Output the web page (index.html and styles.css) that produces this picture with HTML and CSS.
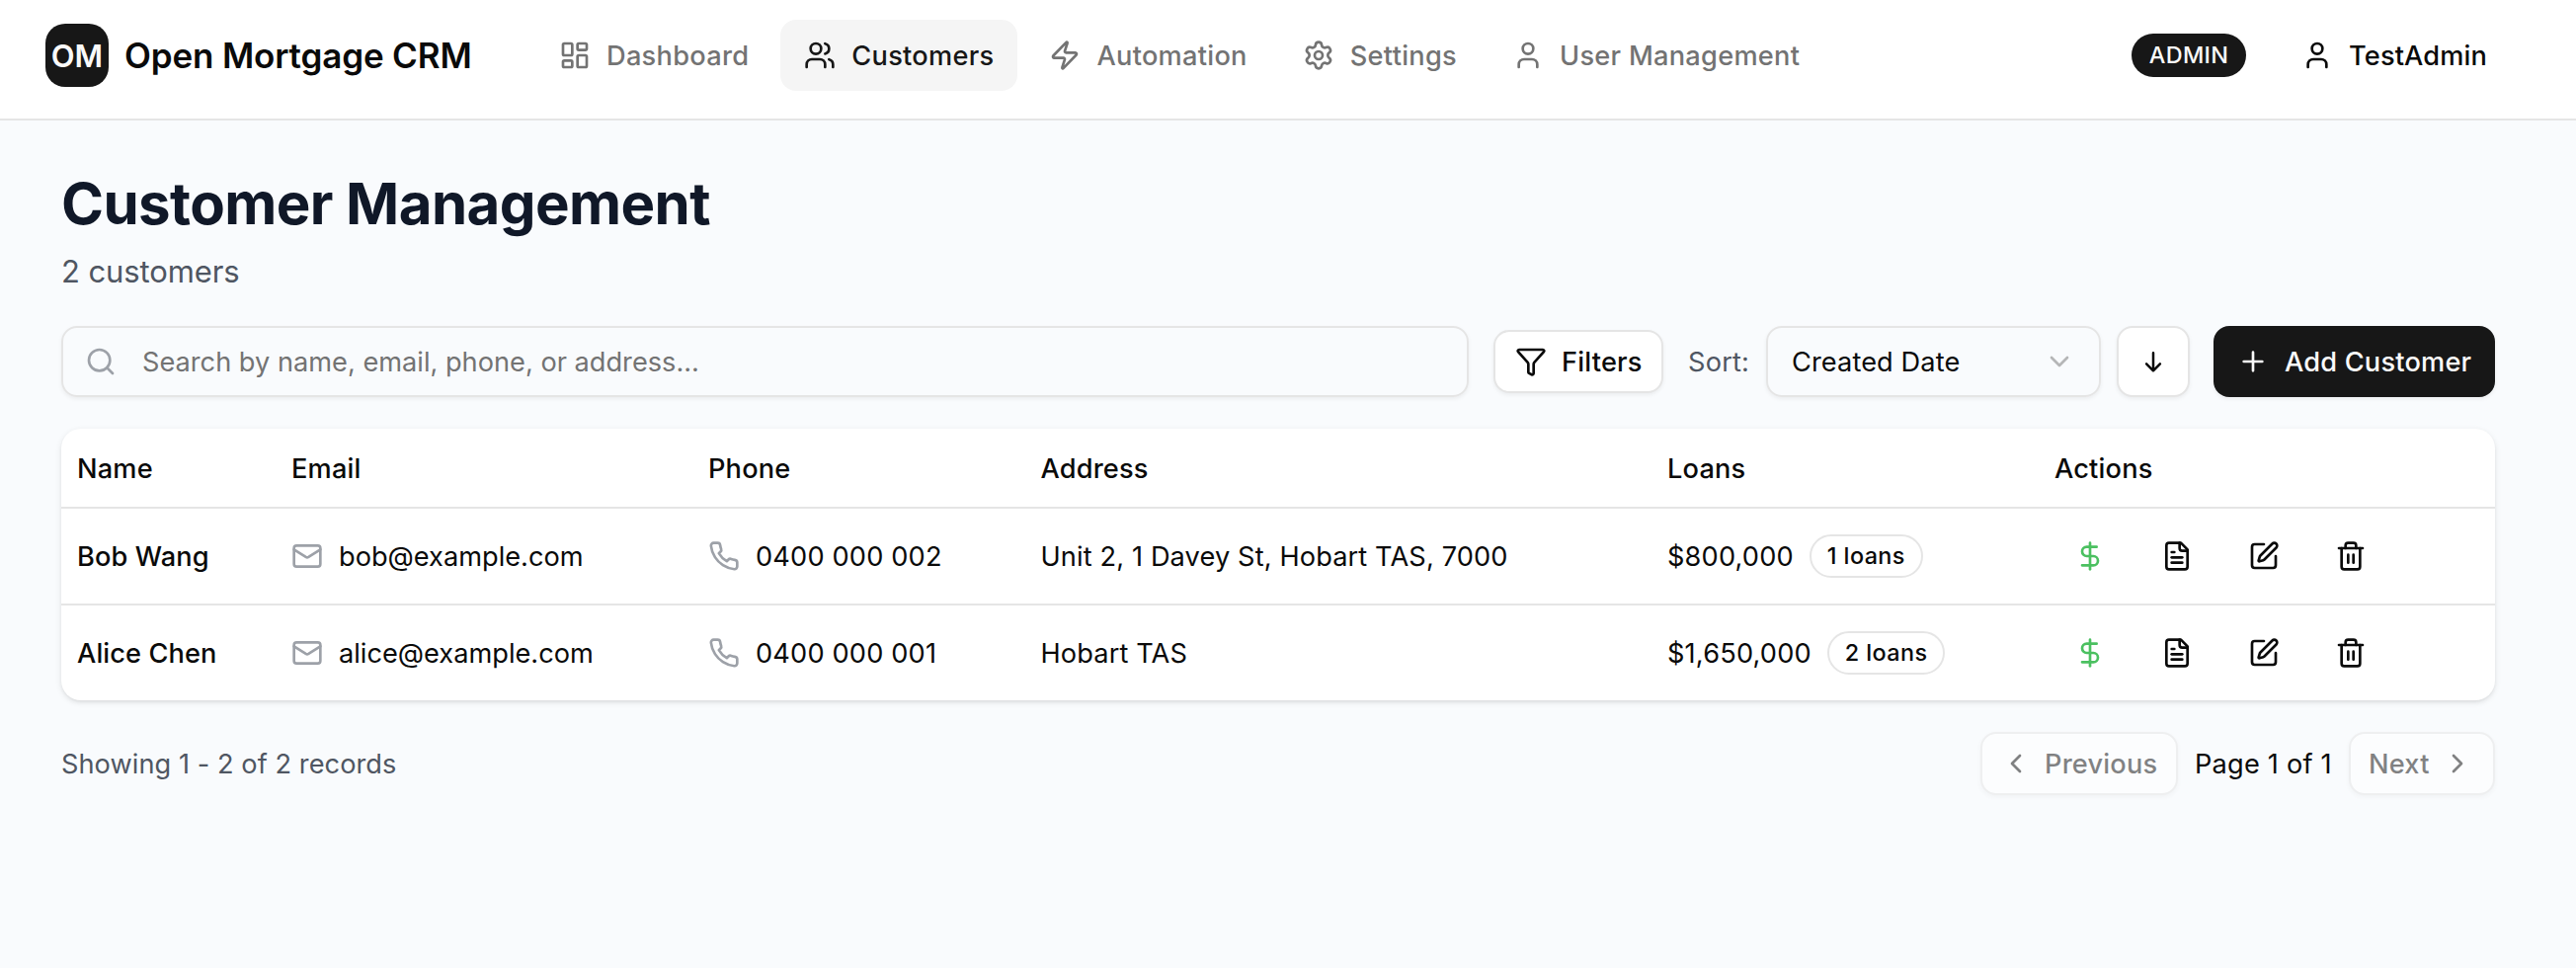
FILE: index.html
```html
<!DOCTYPE html>
<html lang="en">
<head>
<meta charset="utf-8">
<title>Open Mortgage CRM</title>
<link rel="stylesheet" href="styles.css">
</head>
<body>
<svg class="sprite" xmlns="http://www.w3.org/2000/svg">
  <symbol id="dashboard" viewBox="0 0 24 24"><rect width="7" height="9" x="3" y="3" rx="1"/><rect width="7" height="5" x="14" y="3" rx="1"/><rect width="7" height="9" x="14" y="12" rx="1"/><rect width="7" height="5" x="3" y="16" rx="1"/></symbol>
  <symbol id="users" viewBox="0 0 24 24"><path d="M16 21v-2a4 4 0 0 0-4-4H6a4 4 0 0 0-4 4v2"/><circle cx="9" cy="7" r="4"/><path d="M22 21v-2a4 4 0 0 0-3-3.87"/><path d="M16 3.13a4 4 0 0 1 0 7.75"/></symbol>
  <symbol id="zap" viewBox="0 0 24 24"><path d="M4 14a1 1 0 0 1-.78-1.63l9.9-10.2a.5.5 0 0 1 .86.46l-1.92 6.02A1 1 0 0 0 13 10h7a1 1 0 0 1 .78 1.63l-9.9 10.2a.5.5 0 0 1-.86-.46l1.92-6.02A1 1 0 0 0 11 14z"/></symbol>
  <symbol id="settings" viewBox="0 0 24 24"><path d="M9.671 4.136a2.34 2.34 0 0 1 4.659 0 2.34 2.34 0 0 0 3.319 1.915 2.34 2.34 0 0 1 2.33 4.033 2.34 2.34 0 0 0 0 3.831 2.34 2.34 0 0 1-2.33 4.033 2.34 2.34 0 0 0-3.319 1.915 2.34 2.34 0 0 1-4.659 0 2.34 2.34 0 0 0-3.32-1.915 2.34 2.34 0 0 1-2.33-4.033 2.34 2.34 0 0 0 0-3.831A2.34 2.34 0 0 1 6.35 6.051a2.34 2.34 0 0 0 3.319-1.915"/><circle cx="12" cy="12" r="3"/></symbol>
  <symbol id="user" viewBox="0 0 24 24"><path d="M19 21v-2a4 4 0 0 0-4-4H9a4 4 0 0 0-4 4v2"/><circle cx="12" cy="7" r="4"/></symbol>
  <symbol id="search" viewBox="0 0 24 24"><circle cx="11" cy="11" r="8"/><path d="m21 21-4.3-4.3"/></symbol>
  <symbol id="filter" viewBox="0 0 24 24"><path d="M10 20a1 1 0 0 0 .553.895l2 1A1 1 0 0 0 14 21v-7a2 2 0 0 1 .517-1.341L21.74 4.67A1 1 0 0 0 21 3H3a1 1 0 0 0-.742 1.67l7.225 7.989A2 2 0 0 1 10 14z"/></symbol>
  <symbol id="chevron-down" viewBox="0 0 24 24"><path d="m6 9 6 6 6-6"/></symbol>
  <symbol id="chevron-left" viewBox="0 0 24 24"><path d="m15 18-6-6 6-6"/></symbol>
  <symbol id="chevron-right" viewBox="0 0 24 24"><path d="m9 18 6-6-6-6"/></symbol>
  <symbol id="arrow-down" viewBox="0 0 32 32"><path d="M16 7.2v18.1M9.1 18.4l6.9 6.9 6.9-6.9"/></symbol>
  <symbol id="plus" viewBox="0 0 24 24"><path d="M5 12h14M12 5v14"/></symbol>
  <symbol id="mail" viewBox="0 0 24 24"><rect width="20" height="16" x="2" y="4" rx="2"/><path d="m22 7-8.991 5.727a2 2 0 0 1-2.009 0L2 7"/></symbol>
  <symbol id="phone" viewBox="0 0 24 24"><path d="M22 16.92v3a2 2 0 0 1-2.18 2 19.79 19.79 0 0 1-8.63-3.07 19.5 19.5 0 0 1-6-6 19.79 19.79 0 0 1-3.07-8.67A2 2 0 0 1 4.11 2h3a2 2 0 0 1 2 1.72 12.84 12.84 0 0 0 .7 2.81 2 2 0 0 1-.45 2.11L8.09 9.91a16 16 0 0 0 6 6l1.27-1.27a2 2 0 0 1 2.11-.45 12.84 12.84 0 0 0 2.81.7A2 2 0 0 1 22 16.92z"/></symbol>
  <symbol id="dollar" viewBox="0 0 24 24"><path d="M12 2v20"/><path d="M17 5H9.5a3.5 3.5 0 0 0 0 7h5a3.5 3.5 0 0 1 0 7H6"/></symbol>
  <symbol id="file" viewBox="0 0 24 24"><path d="M15 2H6a2 2 0 0 0-2 2v16a2 2 0 0 0 2 2h12a2 2 0 0 0 2-2V7z"/><path d="M14 2v4a2 2 0 0 0 2 2h4"/><path d="M10 9H8"/><path d="M16 13H8"/><path d="M16 17H8"/></symbol>
  <symbol id="edit" viewBox="0 0 24 24"><path d="M12 3H5a2 2 0 0 0-2 2v14a2 2 0 0 0 2 2h14a2 2 0 0 0 2-2v-7"/><path d="M18.375 2.625a1 1 0 0 1 3 3l-9.013 9.014a2 2 0 0 1-.853.505l-2.873.84a.5.5 0 0 1-.62-.62l.84-2.873a2 2 0 0 1 .506-.852z"/></symbol>
  <symbol id="trash" viewBox="0 0 24 24"><path d="M3 6h18"/><path d="M19 6v14a2 2 0 0 1-2 2H7a2 2 0 0 1-2-2V6"/><path d="M8 6V4a2 2 0 0 1 2-2h4a2 2 0 0 1 2 2v2"/><path d="M10 11v6"/><path d="M14 11v6"/></symbol>
</svg>

<header class="topbar">
  <div class="logo">OM</div>
  <div class="brand">Open Mortgage CRM</div>
  <nav class="nav">
    <a class="nav-item"><svg class="icon"><use href="#dashboard"/></svg><span>Dashboard</span></a>
    <a class="nav-item active"><svg class="icon"><use href="#users"/></svg><span>Customers</span></a>
    <a class="nav-item"><svg class="icon"><use href="#zap"/></svg><span>Automation</span></a>
    <a class="nav-item"><svg class="icon"><use href="#settings"/></svg><span>Settings</span></a>
    <a class="nav-item"><svg class="icon"><use href="#user"/></svg><span>User Management</span></a>
  </nav>
  <span class="role">ADMIN</span>
  <div class="account"><svg class="icon"><use href="#user"/></svg><span>TestAdmin</span></div>
</header>

<main class="page">
  <h1 class="title">Customer Management</h1>
  <p class="subtitle">2 customers</p>

  <div class="toolbar">
    <div class="search"><svg class="icon"><use href="#search"/></svg><span>Search by name, email, phone, or address...</span></div>
    <button class="btn filters"><svg class="icon"><use href="#filter"/></svg><span>Filters</span></button>
    <span class="sort-label">Sort:</span>
    <div class="select"><span>Created Date</span><svg class="icon"><use href="#chevron-down"/></svg></div>
    <button class="btn direction"><svg class="icon"><use href="#arrow-down"/></svg></button>
    <button class="btn add"><svg class="icon"><use href="#plus"/></svg><span>Add Customer</span></button>
  </div>

  <div class="table">
    <div class="row head">
      <div>Name</div><div>Email</div><div>Phone</div><div>Address</div><div>Loans</div><div>Actions</div>
    </div>
    <div class="row">
      <div class="name">Bob Wang</div>
      <div class="cell email"><svg class="icon muted"><use href="#mail"/></svg><span>bob@example.com</span></div>
      <div class="cell"><svg class="icon muted"><use href="#phone"/></svg><span>0400 000 002</span></div>
      <div class="address">Unit 2, 1 Davey St, Hobart TAS, 7000</div>
      <div class="cell"><span>$800,000</span><span class="badge">1 loans</span></div>
      <div class="actions"><svg class="icon green"><use href="#dollar"/></svg><svg class="icon"><use href="#file"/></svg><svg class="icon"><use href="#edit"/></svg><svg class="icon"><use href="#trash"/></svg></div>
    </div>
    <div class="row">
      <div class="name">Alice Chen</div>
      <div class="cell email"><svg class="icon muted"><use href="#mail"/></svg><span>alice@example.com</span></div>
      <div class="cell"><svg class="icon muted"><use href="#phone"/></svg><span>0400 000 001</span></div>
      <div class="address">Hobart TAS</div>
      <div class="cell"><span>$1,650,000</span><span class="badge">2 loans</span></div>
      <div class="actions"><svg class="icon green"><use href="#dollar"/></svg><svg class="icon"><use href="#file"/></svg><svg class="icon"><use href="#edit"/></svg><svg class="icon"><use href="#trash"/></svg></div>
    </div>
  </div>

  <div class="footer">
    <span class="summary">Showing 1 - 2 of 2 records</span>
    <div class="pager">
      <button class="btn prev" disabled><svg class="icon"><use href="#chevron-left"/></svg><span>Previous</span></button>
      <span class="page-count">Page 1 of 1</span>
      <button class="btn next" disabled><span>Next</span><svg class="icon"><use href="#chevron-right"/></svg></button>
    </div>
  </div>
</main>
</body>
</html>
```
FILE: styles.css
```css
* { box-sizing: border-box; }
body {
  margin: 0;
  min-height: 980px;
  background: #f9fbfd;
  color: #0a0a0a;
  font: 400 27.2px/40px Inter, sans-serif;
  white-space: nowrap;
}
.sprite { display: none; }
.icon {
  width: 32px;
  height: 32px;
  flex: none;
  fill: none;
  stroke: currentColor;
  stroke-width: 2;
  stroke-linecap: round;
  stroke-linejoin: round;
}
.topbar {
  display: flex;
  align-items: center;
  height: 122px;
  padding: 0 50px 8px 46px;
  background: #fff;
  border-bottom: 2px solid #e5e5e5;
}
.logo {
  width: 64px;
  height: 64px;
  border-radius: 20px;
  background: #171717;
  color: #fafafa;
  font-size: 31px;
  font-weight: 600;
  line-height: 66px;
  text-align: center;
}
.brand {
  width: 416px;
  padding-left: 16px;
  font-size: 35px;
  font-weight: 600;
  letter-spacing: -0.15px;
}
.nav {
  display: flex;
  gap: 8px;
  margin-left: 16px;
  font-weight: 500;
  letter-spacing: .28px;
}
.nav-item {
  display: flex;
  align-items: center;
  gap: 16px;
  height: 72px;
  padding: 0 24px;
  border-radius: 16px;
  color: #737373;
}
.nav-item.active { background: #f5f5f5; color: #171717; }
.role {
  display: flex;
  align-items: center;
  justify-content: center;
  width: 116px;
  height: 44px;
  margin-left: auto;
  border-radius: 22px;
  background: #171717;
  color: #fafafa;
  font-size: 23.4px;
  font-weight: 500;
  letter-spacing: .3px;
}
.account {
  display: flex;
  align-items: center;
  gap: 16px;
  width: 284px;
  padding-left: 56px;
  font-weight: 500;
  letter-spacing: .15px;
}
.nav-item span, .account span, .search span, .btn span, .select span,
.sort-label, .name, .address, .head div, .cell span, .summary, .page-count {
  padding-top: 2px;
}
.page { padding: 48px 82px 0 62px; }
.title {
  margin: 0;
  color: #101828;
  font-size: 58.2px;
  font-weight: 700;
  line-height: 72px;
  letter-spacing: -.6px;
}
.subtitle { margin: 9px 0 0; color: #4f5662; font-size: 31px; line-height: 48px; letter-spacing: -.1px; }
.toolbar { display: flex; align-items: center; margin-top: 31px; }
.search, .select, .btn {
  display: flex;
  align-items: center;
  height: 72px;
  border: 2px solid #e5e5e5;
  border-radius: 16px;
  box-shadow: 0 2px 4px rgba(0, 0, 0, .06);
}
.search {
  flex: 1;
  gap: 26px;
  padding-left: 22px;
  color: #737373;
}
.search .icon { color: #9da1a8; }
.btn {
  background: #fff;
  color: #0a0a0a;
  font: inherit;
  font-weight: 500;
  letter-spacing: .2px;
  padding: 0 20px;
}
.filters { width: 172px; height: 64px; margin-left: 25px; gap: 15px; }
.sort-label { width: 79px; margin-left: 25px; color: #4f5662; letter-spacing: .2px; }
.select { width: 339px; justify-content: space-between; padding: 0 24px; letter-spacing: .1px; }
.select .icon { color: #737373; opacity: .5; }
.direction { width: 74px; margin-left: 16px; justify-content: center; padding: 0; }
.direction .icon { stroke-width: 2.5; }
.add {
  width: 285px;
  margin-left: 24px;
  gap: 16px;
  padding: 0 24px;
  border: 0;
  background: #171717;
  color: #fafafa;
}
.table {
  height: 275px;
  margin-top: 32px;
  border-radius: 20px;
  background: #fff;
  box-shadow: 0 2px 6px rgba(0, 0, 0, .1), 0 2px 4px -2px rgba(0, 0, 0, .1);
}
.row {
  display: grid;
  grid-template-columns: 217px 422px 336.5px 634.5px 392px 1fr;
  align-items: center;
  height: 98px;
  padding-left: 16px;
  border-bottom: 2px solid #e5e5e5;
  letter-spacing: .17px;
}
.row:last-child { height: 96px; border-bottom: 0; }
.row.head { height: 81px; font-weight: 500; }
.name { font-weight: 500; letter-spacing: .1px; }
.address { letter-spacing: .12px; }
.cell { display: flex; align-items: center; gap: 16px; }
.email { letter-spacing: 0; }
.muted { color: #9da1a8; }
.green { color: #4bc060; }
.cell .badge {
  display: flex;
  align-items: center;
  height: 44px;
  padding: 0 16px;
  border: 2px solid #e5e5e5;
  border-radius: 22px;
  font-size: 23.4px;
  font-weight: 500;
  letter-spacing: .4px;
}
.actions { display: flex; gap: 56px; padding-left: 20px; }
.footer { display: flex; align-items: center; justify-content: space-between; margin-top: 32px; }
.summary { color: #4f5662; letter-spacing: .05px; }
.pager { display: flex; align-items: center; }
.pager .btn { height: 64px; padding: 0 18px; }
.pager .prev { width: 200px; gap: 13px; }
.pager .next { width: 148px; padding-right: 20px; justify-content: space-between; }
.page-count { width: 173px; padding-left: 17px; letter-spacing: .2px; }
.btn:disabled { opacity: .5; }
```
